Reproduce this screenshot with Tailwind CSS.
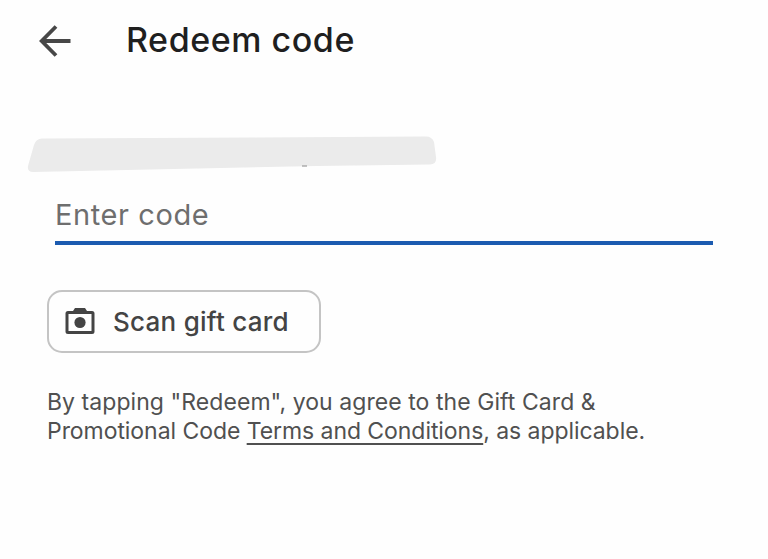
<!DOCTYPE html>
<html lang="en">
<head>
  <meta charset="UTF-8" />
  <meta name="viewport" content="width=device-width, initial-scale=1.0"/>
  <title>Redeem code</title>
  <script src="https://cdn.jsdelivr.net/npm/@tailwindcss/browser@4"></script>
</head>
<body class="bg-[#fefefe] h-screen overflow-hidden font-['Inter','Liberation_Sans',sans-serif]">

  <!-- Header -->
  <header class="flex items-center h-20 pl-[39px]">
    <button aria-label="Back">
      <svg class="block w-8 h-8 mt-0.5" viewBox="0 0 32 32" fill="none" stroke="#474747" stroke-width="3.8">
        <path d="M31.5 16H3M17 1.5L2.7 16L17 30.5"/>
      </svg>
    </button>
    <h1 class="ml-[55px] text-[34px] font-medium leading-10 tracking-[0.55px] text-[#1f1f1f] whitespace-nowrap">Redeem code</h1>
  </header>

  <main class="pt-[55px]">
    <!-- Hidden account name -->
    <svg class="block ml-[27px] w-[411px] h-[38px]" viewBox="0 0 411 38">
      <path d="M15 3.5L399 1.5Q405 1.5 407 7L409 22Q410 29 403 29.500L290 31L6 37Q0 37 1 31L7 10Q9 3.500 15 3.500Z" fill="#ebebeb"/>
      <path d="M275 31H280" stroke="#8a8a8a" stroke-width="1"/>
    </svg>

    <!-- Code input -->
    <div class="ml-[55px] mt-[22px] w-[658px] h-[50px] border-b-4 border-[#1c5bb0]">
      <p class="text-[29px] leading-10 tracking-[0.6px] text-[#6e6e6e] whitespace-nowrap">Enter code</p>
    </div>

    <!-- Scan button -->
    <button class="flex items-center ml-[47px] mt-[45px] w-[274px] h-[63px] pl-4 rounded-[15px] border-2 border-[#c4c4c4]">
      <svg class="block w-[30px] h-[28px] -mt-px" viewBox="0 0 30 28">
        <path fill="#444" fill-rule="evenodd" d="M3 4H8L10 1H20L22 4H27Q29.500 4 29.500 6.500V24.500Q29.500 27 27 27H3Q0.500 27 0.500 24.500V6.500Q0.500 4 3 4ZM3.500 7V24H26.500V7Z"/>
        <circle cx="15" cy="15.500" r="5.600" fill="#444"/>
      </svg>
      <span class="ml-[18px] text-[26px] font-medium leading-8 tracking-[0.25px] text-[#444] whitespace-nowrap">Scan gift card</span>
    </button>

    <!-- Terms -->
    <p class="ml-[47px] mt-[35px] text-[23px] leading-[29px] text-[#505050] whitespace-nowrap">
      <span class="block tracking-[0.06px]">By tapping "Redeem", you agree to the Gift Card &amp;</span>
      <span class="block tracking-[-0.06px]">Promotional Code <a href="#" class="underline decoration-2 underline-offset-4">Terms and Conditions</a>, as applicable.</span>
    </p>
  </main>

</body>
</html>
